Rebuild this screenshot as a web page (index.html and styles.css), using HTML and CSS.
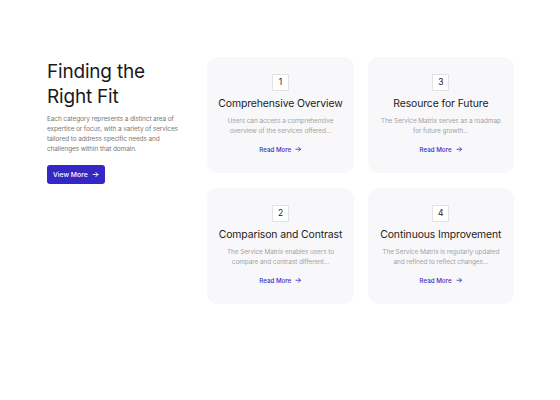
FILE: index.html
```html
<!DOCTYPE html>
<html>
<head>
<meta charset="utf-8">
<link rel="stylesheet" href="styles.css">
</head>
<body>
<section class="wrap">
  <div class="intro">
    <h1 class="intro-title">Finding the Right Fit</h1>
    <p class="intro-text">Each category represents a distinct area of expertise or focus, with a variety of services tailored to address specific needs and challenges within that domain.</p>
    <a class="btn" href="#">View More
      <svg class="arrow" viewBox="0 0 10 10"><path d="M1.5 5h7M5.5 2l3 3-3 3" fill="none" stroke="currentColor" stroke-width="1.3" stroke-linecap="round" stroke-linejoin="round"/></svg>
    </a>
  </div>

  <div class="card">
    <div class="num">1</div>
    <h3 class="card-title">Comprehensive Overview</h3>
    <p class="card-text">Users can access a comprehensive overview of the services offered...</p>
    <a class="more" href="#">Read More
      <svg class="arrow" viewBox="0 0 10 10"><path d="M1.5 5h7M5.5 2l3 3-3 3" fill="none" stroke="currentColor" stroke-width="1.3" stroke-linecap="round" stroke-linejoin="round"/></svg>
    </a>
  </div>
  <div class="card">
    <div class="num">3</div>
    <h3 class="card-title">Resource for Future</h3>
    <p class="card-text">The Service Matrix serves as a roadmap for future growth...</p>
    <a class="more" href="#">Read More
      <svg class="arrow" viewBox="0 0 10 10"><path d="M1.5 5h7M5.5 2l3 3-3 3" fill="none" stroke="currentColor" stroke-width="1.3" stroke-linecap="round" stroke-linejoin="round"/></svg>
    </a>
  </div>
  <div class="card">
    <div class="num">2</div>
    <h3 class="card-title">Comparison and Contrast</h3>
    <p class="card-text">The Service Matrix enables users to compare and contrast different...</p>
    <a class="more" href="#">Read More
      <svg class="arrow" viewBox="0 0 10 10"><path d="M1.5 5h7M5.5 2l3 3-3 3" fill="none" stroke="currentColor" stroke-width="1.3" stroke-linecap="round" stroke-linejoin="round"/></svg>
    </a>
  </div>
  <div class="card">
    <div class="num">4</div>
    <h3 class="card-title">Continuous Improvement</h3>
    <p class="card-text">The Service Matrix is regularly updated and refined to reflect changes...</p>
    <a class="more" href="#">Read More
      <svg class="arrow" viewBox="0 0 10 10"><path d="M1.5 5h7M5.5 2l3 3-3 3" fill="none" stroke="currentColor" stroke-width="1.3" stroke-linecap="round" stroke-linejoin="round"/></svg>
    </a>
  </div>
</section>
</body>
</html>
```

FILE: styles.css
```css
* { box-sizing: border-box; }
html, body { margin: 0; padding: 0; background: #ffffff; }
body {
  font-family: Inter, "Noto Sans", "Liberation Sans", sans-serif;
  color: #1c1c1c;
  width: 560px;
  height: 400px;
}
.wrap {
  display: grid;
  grid-template-columns: repeat(3, minmax(0, 1fr));
  grid-template-rows: 116px 116px;
  column-gap: 14px;
  row-gap: 15px;
  padding: 57px 46px 0 47px;
}
.intro {
  grid-row: span 2;
  padding-top: 2px;
}
.intro-title {
  margin: 0;
  font-size: 19px;
  line-height: 25px;
  font-weight: 400;
  letter-spacing: -0.2px;
  color: #1a1a1a;
}
.intro-text {
  margin: 5px 0 0;
  max-width: 139px;
  font-size: 6.5px;
  line-height: 10px;
  letter-spacing: -0.12px;
  color: #7a7a7a;
}
.btn {
  margin-top: 11px;
  display: inline-flex;
  align-items: center;
  gap: 4px;
  height: 19px;
  padding: 0 6px 0 6px;
  background: #3527c4;
  color: #fff;
  border-radius: 3px;
  font-size: 6.8px;
  font-weight: 500;
  text-decoration: none;
}
.arrow { width: 7px; height: 7px; display: block; }
.card {
  background: #f8f8fa;
  border-radius: 11px;
  padding: 17px 6px 0;
  display: flex;
  flex-direction: column;
  align-items: center;
  text-align: center;
}
.num {
  width: 17px;
  height: 17px;
  border: 1px solid #e2e2e4;
  background: #fff;
  font-size: 8.5px;
  line-height: 15px;
  text-align: center;
  color: #222;
}
.card-title {
  margin: 6px 0 0;
  font-size: 10.4px;
  line-height: 14px;
  font-weight: 400;
  letter-spacing: -0.1px;
  color: #1c1c1c;
  white-space: nowrap;
}
.card-text {
  margin: 5px 0 0;
  font-size: 6.5px;
  line-height: 10px;
  letter-spacing: -0.1px;
  color: #a3a3a6;
  padding: 0 4px;
}
.more {
  margin-top: 10px;
  display: inline-flex;
  align-items: center;
  gap: 4px;
  font-size: 6.2px;
  font-weight: 500;
  color: #3a2fc4;
  text-decoration: none;
}
.more .arrow { width: 6.5px; height: 6.5px; }
```
